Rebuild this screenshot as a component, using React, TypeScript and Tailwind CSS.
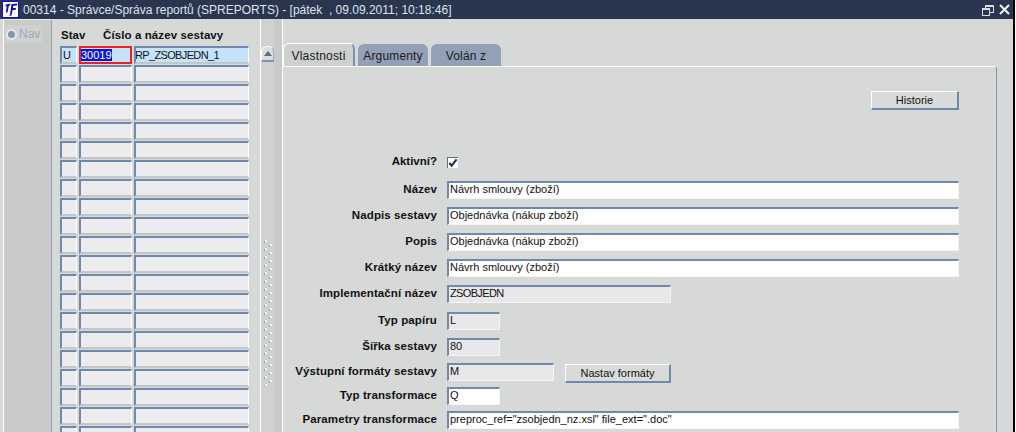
const font = "font-['Liberation_Sans',Arial,sans-serif]";

function Cell({ w, bg = "bg-[#ecebed]", children, className = "" }: { w: string; bg?: string; children?: React.ReactNode; className?: string }) {
  return (
    <div className={`${w} ${bg} ${className} h-[18px] shrink-0 border-t-2 border-l-2 border-t-[#6f89ad] border-l-[#6f89ad] border-r border-b-2 border-r-white border-b-[#c4c7c6] text-[11px] leading-[14px] text-[#111] overflow-hidden whitespace-nowrap`}>
      {children}
    </div>
  );
}

function Row({ first = false }: { first?: boolean }) {
  return (
    <div className="flex gap-[2px] h-[19px]">
      <Cell w="w-[17px]" bg={first ? "bg-[#c5e2fb]" : undefined}>{first ? <span className="pl-px">U</span> : ""}</Cell>
      {first ? (
        <div className="w-[53px] h-[18px] shrink-0 border-2 border-[#e8211f] bg-[#c5e2fb] text-[11px] leading-[14px] text-white">
          <span className="bg-[#0a14d8]">30019</span>
        </div>
      ) : (
        <Cell w="w-[53px]" />
      )}
      <Cell w="w-[115px]" bg={first ? "bg-[#c5e2fb]" : undefined}>
        {first ? <span className="tracking-[-0.65px] ml-[-1px]">RP_ZSOBJEDN_1</span> : ""}
      </Cell>
    </div>
  );
}

function Field({
  label,
  width,
  value,
  bg = "bg-white",
  mt,
  extra,
  valueClass = "",
}: {
  label: string;
  width: string;
  value: string;
  bg?: string;
  mt: string;
  extra?: React.ReactNode;
  valueClass?: string;
}) {
  return (
    <div className={`flex items-center h-[18px] ${mt}`}>
      <div className="w-[154px] shrink-0 text-right text-[11.5px] font-bold text-[#111] tracking-[0.1px] whitespace-nowrap">{label}</div>
      <div className={`${width} ${bg} ml-[10px] h-[18px] shrink-0 border-t-2 border-l-2 border-t-[#6f89ad] border-l-[#6f89ad] border-r border-b border-r-[#f4f4f4] border-b-[#f4f4f4] pl-px text-[11px] leading-[13px] text-[#111] whitespace-nowrap overflow-hidden ${valueClass}`}>
        {value}
      </div>
      {extra}
    </div>
  );
}

function Dots() {
  return (
    <svg width="11" height="146" className="block">
      {Array.from({ length: 37 }).map((_, i) => (
        <g key={i}>
          <rect x={i % 2 ? 8 : 3} y={i * 4} width="2" height="2" fill="#f6f7fb" />
          <rect x={i % 2 ? 7 : 2} y={i * 4 + 1} width="1" height="2" fill="#9aa0b8" />
        </g>
      ))}
    </svg>
  );
}

export default function App() {
  return (
    <div className={`${font} w-[1016px] h-[432px] overflow-hidden bg-[#d7d9d8] flex flex-col border-r border-[#fdfdfd]`}>
      <div className="h-[19px] shrink-0 bg-[#2a3650] border-r-2 border-black flex items-center">
        <div className="ml-[2px] w-[17px] h-[17px] mb-[1px] shrink-0 bg-white border border-[#1a0fd0] flex items-center justify-center">
          <svg width="15" height="15" viewBox="0 0 15 15">
            <path d="M3 2.500L7.500 1.500 7 3.500 5.800 3.800 4.500 10.500H2.800L3.800 4.200 2.200 4.500z" fill="#14109a" />
            <path d="M8.500 2L14.500 1.500 13.800 3.500 10.300 3.800 10 6h3L12.500 8H9.600L8.500 13.500 5.800 14 7 13z" fill="#14109a" />
          </svg>
        </div>
        <div className="ml-[4px] text-[12px] text-[#dfe3ea] whitespace-nowrap flex-1">
          00314 - Správce/Správa reportů (SPREPORTS) - [pátek&nbsp; , 09.09.2011; 10:18:46]
        </div>
        <svg width="12" height="12" viewBox="0 0 12 12" className="mr-[5px]" fill="none" stroke="#d9dde4">
          <rect x="3.500" y="1.500" width="8" height="7" />
          <path d="M3.500 2.500h8" />
          <rect x="0.500" y="4.500" width="7" height="7" fill="#2a3650" />
          <path d="M0.500 5.500h7" />
        </svg>
        <svg width="11" height="11" viewBox="0 0 11 11" className="mr-[3px]" stroke="#f2f4f7" strokeWidth="2">
          <path d="M1 1l9 9M10 1L1 10" />
        </svg>
      </div>

      <div className="flex-1 flex min-h-0 border-r-2 border-black">
        <div className="w-[3px] shrink-0" />
        <div className="w-[49px] shrink-0 bg-[#c9cbca] border-l border-t border-r border-l-white border-t-[#eeeeee] border-r-[#8fa0b8] rounded-tr-sm pt-[5px] pl-[1px]">
          <div className="flex items-center h-[18px] w-[37px] bg-[#d0d2d1] text-[12px] text-[#9ba6b6]">
            <span className="w-[11px] h-[11px] shrink-0 rounded-full bg-[#8494ae] border-2 border-[#e4e6ea] ml-px" />
            <span className="ml-[2px]">Nav</span>
          </div>
        </div>

        <div className="w-[208px] shrink-0 pl-[8px]">
          <div className="flex h-[27px] items-start pt-[9px] text-[11.5px] font-bold text-[#111] leading-[14px] whitespace-nowrap">
            <span className="w-[43px] pl-px">Stav</span>
            <span className="tracking-[0.1px]">Číslo a název sestavy</span>
          </div>
          {Array.from({ length: 21 }).map((_, i) => (
            <Row key={i} first={i === 0} />
          ))}
        </div>

        <div className="w-[14px] shrink-0 bg-[#d0d2d1] border-l border-white flex flex-col items-center">
          <div className="mt-[27px] w-[13px] h-[16px] shrink-0 bg-[#dcdedd] border-t border-l border-white border-r border-b-2 border-r-[#9fb0c8] border-b-[#7f93b0] rounded-t-md flex items-center justify-center">
            <div className="w-0 h-0 border-l-[4px] border-r-[4px] border-b-[5px] border-l-transparent border-r-transparent border-b-[#5d6a80]" />
          </div>
          <div className="mt-[178px]">
            <Dots />
          </div>
        </div>

        <div className="w-[9px] shrink-0 bg-[#c9cbca] border-r border-white" />

        <div className="w-[714px] shrink-0 pt-[25px]">
          <div className="flex h-[22px] items-end gap-[3px] text-[12px] text-[#1a1a1a] relative z-10">
            <div className="w-[72px] h-[23px] bg-[#cfd1d0] border-t border-l border-r-2 border-t-white border-l-white border-r-[#7f93b0] rounded-t-md text-center leading-[25px] tracking-[0.2px]">Vlastnosti</div>
            <div className="w-[70px] h-[22px] bg-[#92a1b8] rounded-t-md text-center leading-[25px] tracking-[0.15px]">Argumenty</div>
            <div className="w-[70px] h-[22px] bg-[#92a1b8] rounded-t-md text-center leading-[25px] tracking-[0.15px]">Volán z</div>
          </div>
          <div className="h-[400px] bg-[#d7d9d8] border-t border-white border-r border-r-[#7f93b0] rounded-tr-sm flex flex-col">
            <div className="flex justify-end pr-[37px] pt-[24px]">
              <div className="w-[88px] h-[19px] bg-[#d9dbda] border-t border-l border-r-2 border-b-2 border-t-white border-l-white border-r-[#6f89ad] border-b-[#6f89ad] text-center text-[11px] leading-[16px] text-[#111]">Historie</div>
            </div>
            <div className="flex items-center h-[16px] mt-[44px]">
              <div className="w-[154px] shrink-0 text-right text-[11.5px] font-bold text-[#111]">Aktivní?</div>
              <div className="ml-[10px] w-[11px] h-[11px] bg-white border-t border-l border-[#5b6f8f] flex items-center justify-center">
                <svg width="11" height="10" viewBox="0 0 11 10" fill="none" stroke="#2a3650" strokeWidth="2.4">
                  <path d="M1.500 5l2.500 3L9.500 1" />
                </svg>
              </div>
            </div>
            <Field mt="mt-[11px]" label="Název" width="w-[512px]" value="Návrh smlouvy (zboží)" />
            <Field mt="mt-[8px]" label="Nadpis sestavy" width="w-[512px]" value="Objednávka (nákup zboží)" />
            <Field mt="mt-[8px]" label="Popis" width="w-[512px]" value="Objednávka (nákup zboží)" />
            <Field mt="mt-[8px]" label="Krátký název" width="w-[512px]" value="Návrh smlouvy (zboží)" />
            <Field mt="mt-[8px]" label="Implementační název" width="w-[224px]" value="ZSOBJEDN" bg="bg-[#e8e7e9]" valueClass="tracking-[-0.65px]" />
            <Field mt="mt-[9px]" label="Typ papíru" width="w-[53px]" value="L" bg="bg-[#e8e7e9]" />
            <Field mt="mt-[8px]" label="Šířka sestavy" width="w-[53px]" value="80" bg="bg-[#e8e7e9]" />
            <Field
              mt="mt-[7px]"
              label="Výstupní formáty sestavy"
              width="w-[107px]"
              value="M"
              bg="bg-[#e8e7e9]"
              extra={
                <div className="ml-[11px] mt-[3px] w-[106px] h-[19px] shrink-0 bg-[#d9dbda] border-t border-l border-r-2 border-b-2 border-t-white border-l-white border-r-[#6f89ad] border-b-[#6f89ad] text-center text-[11px] leading-[16px] text-[#111]">
                  Nastav formáty
                </div>
              }
            />
            <Field mt="mt-[6px]" label="Typ transformace" width="w-[53px]" value="Q" />
            <Field mt="mt-[6px]" label="Parametry transformace" width="w-[512px]" value={'preproc_ref="zsobjedn_nz.xsl" file_ext=".doc"'} />
          </div>
        </div>
      </div>
    </div>
  );
}
